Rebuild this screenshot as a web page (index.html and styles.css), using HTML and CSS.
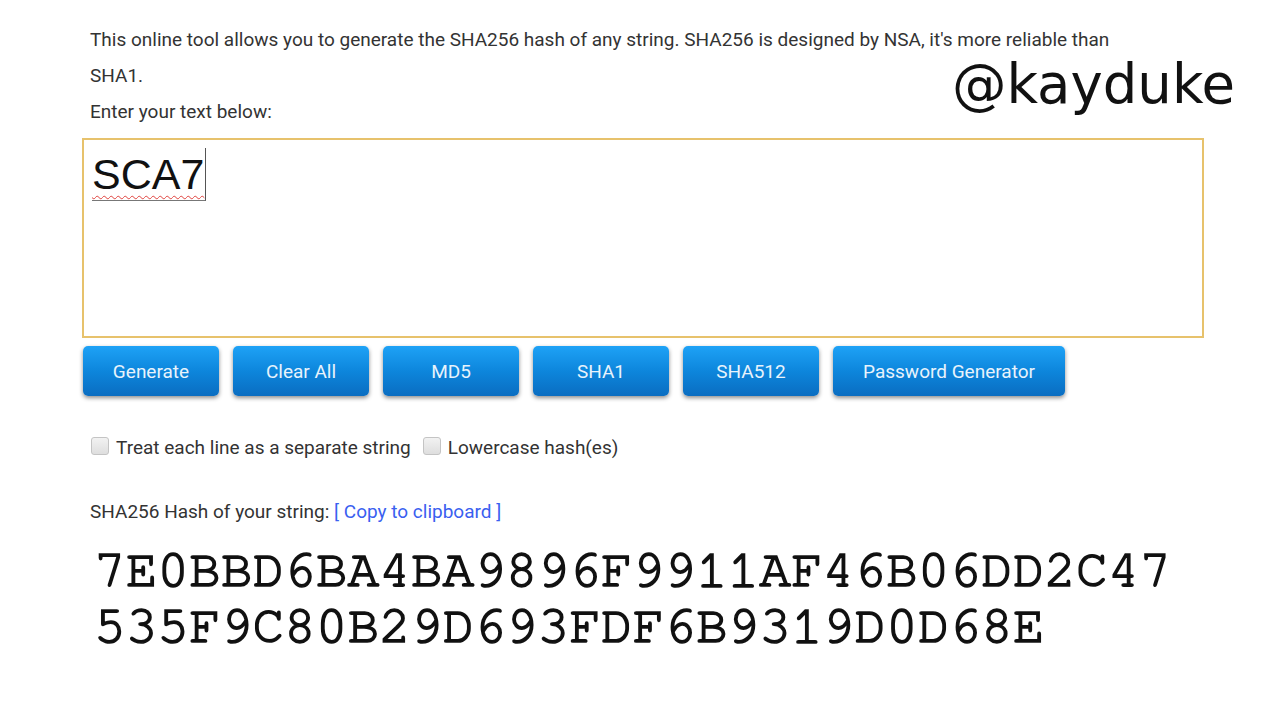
FILE: index.html
```html
<!DOCTYPE html>
<html>
<head>
<meta charset="utf-8">
<link rel="stylesheet" href="styles.css">
</head>
<body>
<div class="page">
  <p class="intro">This online tool allows you to generate the SHA256 hash of any string. SHA256 is designed by NSA, it's more reliable than SHA1.</p>
  <p class="intro">Enter your text below:</p>
  <div class="input-box"><span class="typed">SCA7</span></div>
  <div class="buttons">
    <button class="btn">Generate</button>
    <button class="btn">Clear All</button>
    <button class="btn">MD5</button>
    <button class="btn">SHA1</button>
    <button class="btn">SHA512</button>
    <button class="btn btn-wide">Password Generator</button>
  </div>
  <div class="options">
    <label class="opt"><span class="check"></span>Treat each line as a separate string</label>
    <label class="opt"><span class="check"></span>Lowercase hash(es)</label>
  </div>
  <div class="result-label">SHA256 Hash of your string: <a class="copy">[ Copy to clipboard ]</a></div>
  <div class="hash">7E0BBD6BA4BA9896F9911AF46B06DD2C47<br>535F9C80B29D693FDF6B9319D0D68E</div>
</div>
<div class="watermark">@kayduke</div>
</body>
</html>
```
FILE: styles.css
```css
html, body {
  margin: 0;
  padding: 0;
  background: #ffffff;
}
body {
  font-family: Roboto, "Liberation Sans", sans-serif;
  color: #333333;
  position: relative;
  width: 1267px;
  height: 720px;
  overflow: hidden;
}
.page {
  margin-left: 82px;
  width: 1122px;
  padding-top: 22px;
}
.intro {
  margin: 0;
  padding-left: 8px;
  width: 1050px;
  font-size: 19px;
  line-height: 36px;
}
.input-box {
  margin-top: 8px;
  border: 2px solid #e7c26c;
  padding: 8px 8px;
  box-sizing: border-box;
  height: 200px;
  font-family: "Liberation Sans", Arial, sans-serif;
  font-size: 43px;
  line-height: 50px;
  color: #111;
}
.typed {
  display: inline-block;
  border-right: 1px solid #555;
  border-bottom: 1px solid #777;
  text-decoration: underline wavy #e0433f;
  text-decoration-thickness: 1px;
  text-underline-offset: 6px;
  line-height: 52px;
  padding-right: 1px;
}
.buttons {
  display: flex;
  gap: 14px;
  margin-top: 8px;
  padding-left: 1px;
}
.btn {
  width: 136px;
  height: 50px;
  border: none;
  border-radius: 5px;
  background: linear-gradient(to bottom, #1ea2f6 0%, #0d86dc 50%, #0a6dc1 100%);
  box-shadow: 0 2px 4px rgba(0, 0, 0, 0.45);
  color: #e8f3fc;
  font-family: Roboto, "Liberation Sans", sans-serif;
  font-size: 19px;
  padding: 0;
}
.btn-wide {
  width: 232px;
}
.options {
  display: flex;
  gap: 12px;
  margin-top: 38px;
  padding-left: 9px;
  font-size: 19px;
  line-height: 28px;
}
.opt {
  display: flex;
  align-items: center;
  gap: 7px;
}
.check {
  display: inline-block;
  width: 16px;
  height: 16px;
  border: 1px solid #c4c4c4;
  border-radius: 3px;
  background: linear-gradient(#f2f2f2, #dedede);
  position: relative;
  top: -2px;
}
.result-label {
  margin-top: 36px;
  padding-left: 8px;
  font-size: 19px;
  line-height: 28px;
}
.copy {
  color: #3a5ff0;
}
.hash {
  margin-top: 17px;
  padding-left: 12px;
  font-family: "Nimbus Mono PS", "Nimbus Mono L", FreeMono, "Courier 10 Pitch", "Liberation Mono", "Courier New", monospace;
  font-size: 52.8px;
  line-height: 56px;
  color: #111;
  -webkit-text-stroke: 1.7px #111;
}
.watermark {
  position: absolute;
  left: 952px;
  top: 59px;
  font-family: "DejaVu Sans", sans-serif;
  font-size: 54.5px;
  line-height: 50px;
  color: #111;
}
```
